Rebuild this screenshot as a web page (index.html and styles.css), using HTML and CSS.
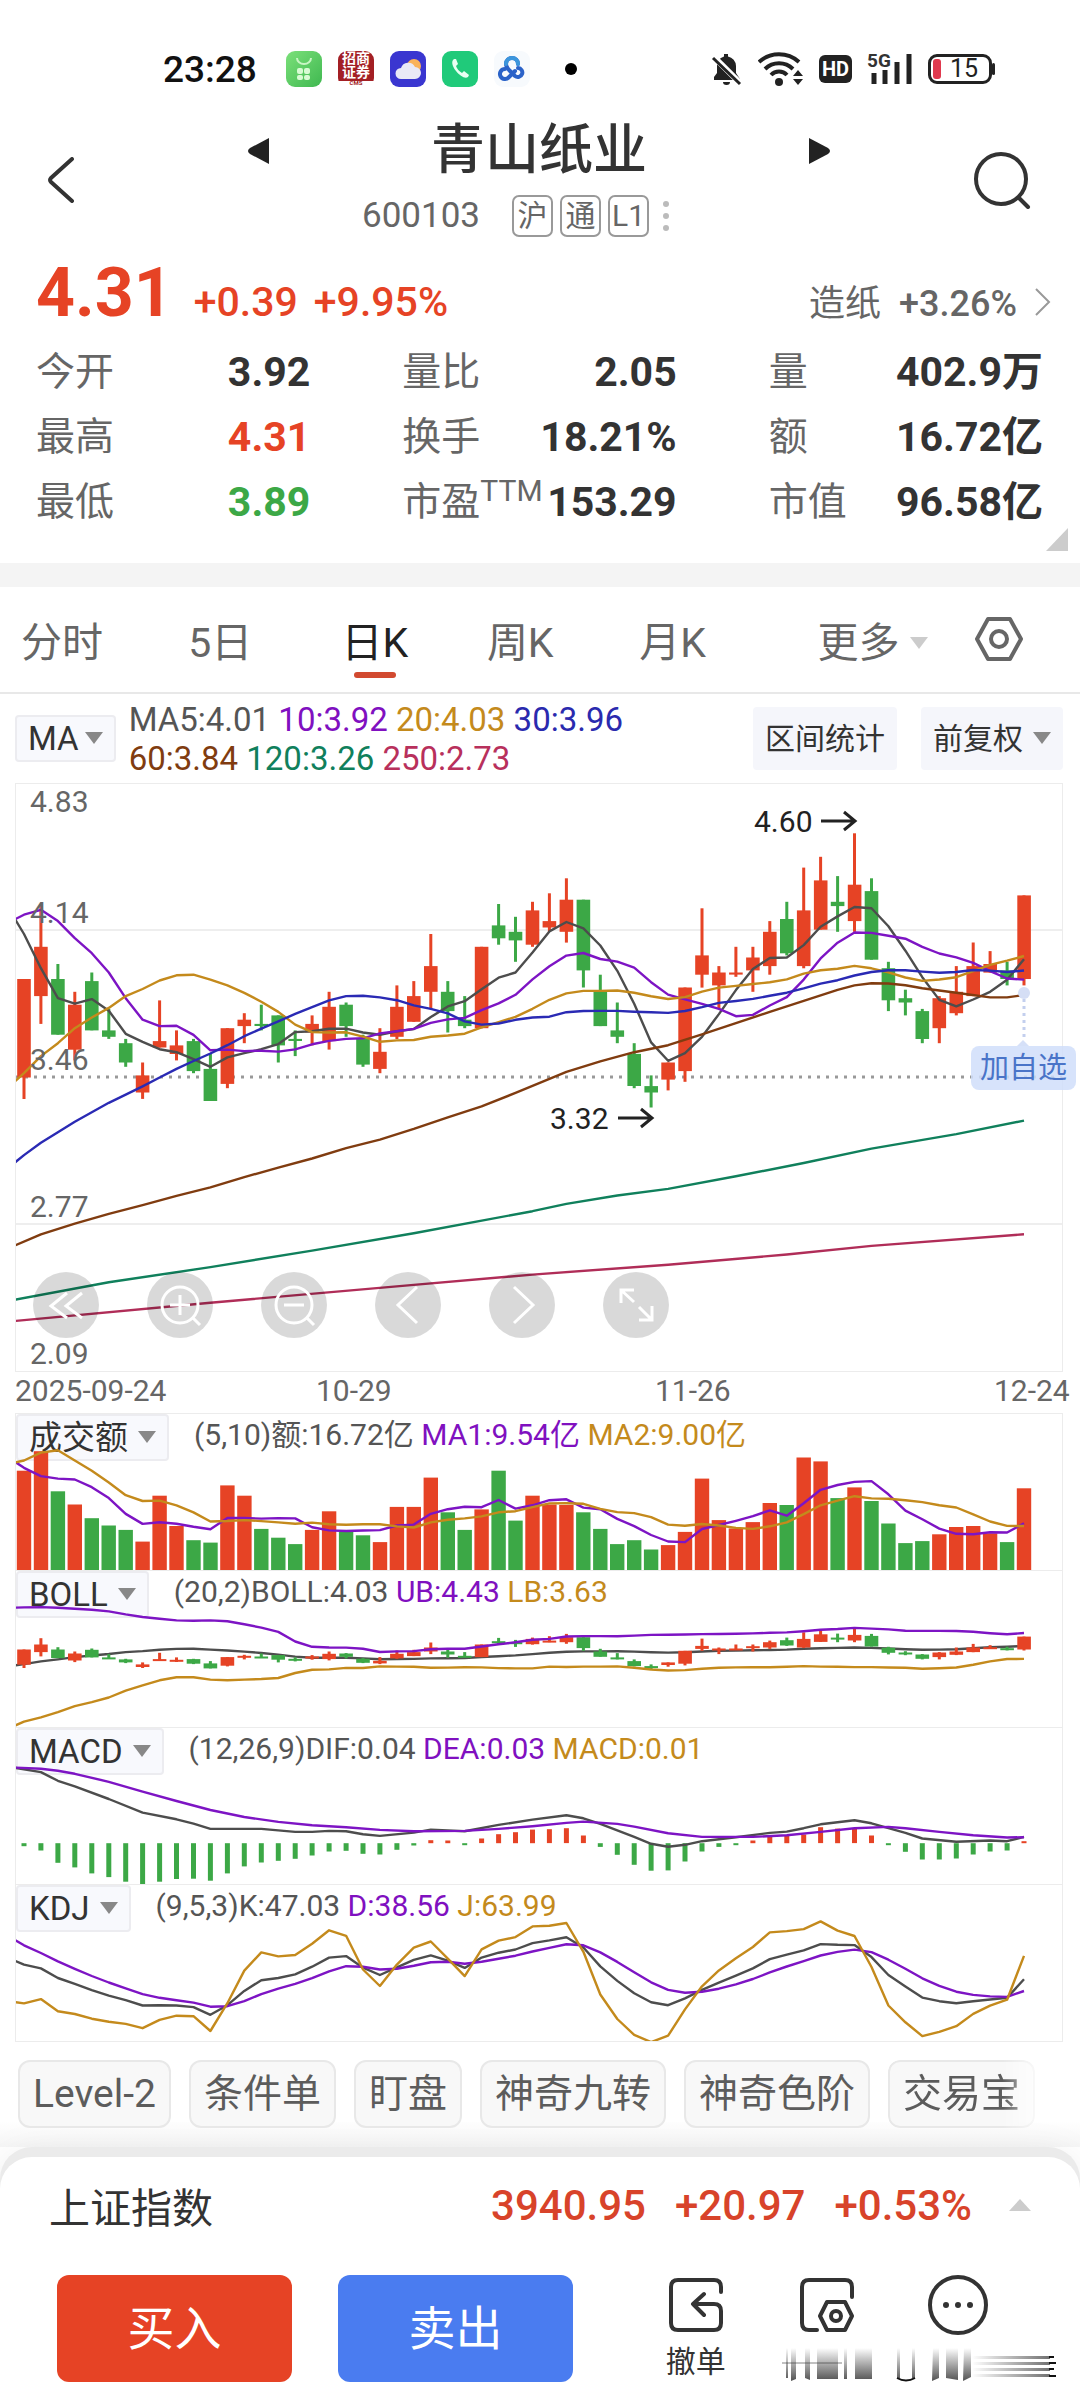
FILE: index.html
```html
<!DOCTYPE html>
<html lang="zh-CN">
<head>
  <meta charset="utf-8">
  <meta name="viewport" content="width=device-width, initial-scale=1">
  <title>青山纸业 600103</title>
  <link rel="stylesheet" href="styles.css">
</head>
<body>
  <!-- Status bar -->
  <div class="status">
    <span class="clock">23:28</span>
    <div class="apps">
      <svg viewBox="0 0 36 36"><defs><linearGradient id="leaf" x2="1" y2="1"><stop offset="0" stop-color="#7be07a"/><stop offset="1" stop-color="#3fb850"/></linearGradient></defs><rect width="36" height="36" rx="9" fill="url(#leaf)"/><path d="M11 7a7 6 0 0 0 14 0" fill="none" stroke="#c8f5c4" stroke-width="2"/><g fill="#d8fbd4"><rect x="11" y="17" width="6" height="6" rx="2"/><rect x="18" y="17" width="6" height="6" rx="2"/><rect x="11" y="24" width="6" height="5" rx="2"/><rect x="18" y="24" width="6" height="5" rx="2"/></g></svg>
      <span class="cms"><span>招商</span><span>证券</span><small>CMS</small></span>
      <svg viewBox="0 0 36 36"><rect width="36" height="36" rx="9" fill="#3a36d0"/><circle cx="24" cy="15" r="7" fill="#f9b25a"/><path d="M11 28a5.500 5.500 0 0 1 0-11 7.500 7.500 0 0 1 14-1 6 6 0 0 1 0 12z" fill="#e9e9f6"/></svg>
      <svg viewBox="0 0 36 36"><rect width="36" height="36" rx="9" fill="#20ca7a"/><path d="M12 8c-3 2-2 7 2 12s9 8 12 6l1-2-5-4-2 2c-3-2-5-4-6-7l2-2-2-5z" fill="#e8fff2"/></svg>
      <svg viewBox="0 0 36 36"><rect width="36" height="36" rx="9" fill="#f7fafd"/><g fill="none" stroke="#2a62c8" stroke-width="4" stroke-linecap="round"><path d="M24 13a6 6 0 0 0-12 0c0 3 2 5 4 7l5 5a4.500 4.500 0 1 0 3-8"/><path d="M11 18a5 5 0 1 0 4 8l6-6"/><path d="M24 13a6 6 0 0 0-12 0" stroke="#3c96dc"/></g></svg>
    </div>
    <i class="dot"></i>
    <div class="signals">
      <svg width="32" height="36" viewBox="0 0 32 36"><path d="M3 29V26l3-4V15a10 10 0 0 1 7-9.500V3h4v2.500A10 10 0 0 1 25 15v7l4 6v1z" fill="#222"/><path d="M12 31h7a3.500 3 0 0 1-7 0z" fill="#222"/><path d="M1 4l29 29" stroke="#fff" stroke-width="6"/><path d="M2 7l27 26" stroke="#222" stroke-width="3"/></svg>
      <svg width="46" height="36" viewBox="0 0 46 36"><g fill="none" stroke="#222" stroke-width="4"><path d="M1 11a30 30 0 0 1 40 0"/><path d="M7 18a20 20 0 0 1 28 0"/><path d="M13 24a11 11 0 0 1 16 0"/></g><circle cx="21" cy="31" r="4" fill="#222"/><path d="M35 25l5-6 5 6zM35 28h10l-5 6z" fill="#222"/></svg>
      <b class="hd">HD</b>
      <span class="cell"><b>5G</b><svg width="46" height="36" viewBox="0 0 46 36"><path d="M7 33V22M18 33V19M30 33V11M42 33V3" stroke="#222" stroke-width="5"/></svg></span>
      <span class="battery">15</span>
    </div>
  </div>

  <!-- Stock header -->
  <header class="header">
    <button class="icon-btn back" aria-label="返回"><svg width="28" height="46" viewBox="0 0 28 46"><path d="M25 2L4 21q-2 2 0 4l21 19" fill="none" stroke="#333" stroke-width="4" stroke-linecap="round"/></svg></button>
    <div class="header-main">
      <div class="title-row">
        <button class="icon-btn" aria-label="上一只"><svg width="22" height="26" viewBox="0 0 22 26"><path d="M22 0v26L3 16q-4-3 0-6z" fill="#222"/></svg></button>
        <h1>青山纸业</h1>
        <button class="icon-btn" aria-label="下一只"><svg width="22" height="26" viewBox="0 0 22 26"><path d="M0 0v26l19-10q4-3 0-6z" fill="#222"/></svg></button>
      </div>
      <div class="code-row">
        <span class="code">600103</span>
        <span class="tag">沪</span><span class="tag">通</span><span class="tag">L1</span>
        <svg width="20" height="30" viewBox="0 0 20 30"><g fill="#bbb"><circle cx="10" cy="3" r="3"/><circle cx="10" cy="15" r="3"/><circle cx="10" cy="27" r="3"/></g></svg>
      </div>
    </div>
    <button class="icon-btn search" aria-label="搜索"><svg width="58" height="58" viewBox="0 0 58 58"><circle cx="28" cy="28" r="25" fill="none" stroke="#333" stroke-width="4"/><path d="M46 47l9 9" stroke="#333" stroke-width="4" stroke-linecap="round"/></svg></button>
  </header>

  <!-- Quote -->
  <section class="quote">
    <div class="price-row">
      <strong class="price">4.31</strong>
      <span class="change">+0.39</span>
      <span class="change">+9.95%</span>
      <a class="sector" href="#"><span class="cn">造纸</span><span>+3.26%</span><svg width="16" height="28" viewBox="0 0 16 28"><path d="M1 1l13 13L1 27" fill="none" stroke="#999" stroke-width="2"/></svg></a>
    </div>
    <div class="stats">
      <div class="stat"><span>今开</span><b>3.92</b></div>
      <div class="stat"><span>量比</span><b>2.05</b></div>
      <div class="stat"><span>量</span><b>402.9万</b></div>
      <div class="stat"><span>最高</span><b class="up">4.31</b></div>
      <div class="stat"><span>换手</span><b>18.21%</b></div>
      <div class="stat"><span>额</span><b>16.72亿</b></div>
      <div class="stat"><span>最低</span><b class="down">3.89</b></div>
      <div class="stat"><span>市盈<sup>TTM</sup></span><b>153.29</b></div>
      <div class="stat"><span>市值</span><b>96.58亿</b></div>
    </div>
    <i class="corner"></i>
  </section>

  <!-- Period tabs -->
  <nav class="tabs">
    <a href="#">分时</a>
    <a href="#">5日</a>
    <a href="#" class="active">日K</a>
    <a href="#">周K</a>
    <a href="#">月K</a>
    <a href="#" class="more">更多<i class="caret"></i></a>
    <button class="icon-btn" aria-label="设置"><svg width="48" height="46" viewBox="0 0 48 46"><g fill="none" stroke="#666" stroke-width="4" stroke-linejoin="round"><path d="M13 3h22l11 20-11 20H13L2 23z"/><circle cx="24" cy="23" r="8"/></g></svg></button>
  </nav>

  <main class="charts">
    <div class="ma-row">
      <button class="picker">MA<i class="caret"></i></button>
      <p class="legend"><span class="c-dark">MA5:4.01</span> <span class="c-purple">10:3.92</span> <span class="c-gold">20:4.03</span> <span class="c-blue">30:3.96</span><br><span class="c-brown">60:3.84</span> <span class="c-green">120:3.26</span> <span class="c-rose">250:2.73</span></p>
      <button class="tool">区间统计</button>
      <button class="tool">前复权<i class="caret"></i></button>
    </div>

    <div class="kline">
      <svg id="kline" viewBox="0 0 1046 587"></svg>
      <div class="controls">
        <button aria-label="最早"><svg viewBox="0 0 66 66"><path d="M34 21L18 34l16 12M49 21L33 34l16 12"/></svg></button>
        <button aria-label="放大"><svg viewBox="0 0 66 66"><circle cx="33" cy="33" r="18"/><path d="M23 33h20M33 23v20M46 46l7 7"/></svg></button>
        <button aria-label="缩小"><svg viewBox="0 0 66 66"><circle cx="33" cy="33" r="18"/><path d="M23 33h20M46 46l7 7"/></svg></button>
        <button aria-label="向左"><svg viewBox="0 0 66 66"><path d="M42 15L23 33l19 18"/></svg></button>
        <button aria-label="向右"><svg viewBox="0 0 66 66"><path d="M25 15l19 18-19 18"/></svg></button>
        <button aria-label="全屏"><svg viewBox="0 0 66 66"><path d="M18 31V18h13M18 18l13 12M49 34v14H36M49 48L36 35"/></svg></button>
      </div>
      <button class="add">加自选</button>
    </div>
    <div class="dates"><span>2025-09-24</span><span>10-29</span><span>11-26</span><span>12-24</span></div>

    <section class="panel">
      <div class="panel-head"><button class="picker">成交额<i class="caret"></i></button><p class="legend"><span class="c-dark">(5,10)额:16.72亿</span> <span class="c-purple">MA1:9.54亿</span> <span class="c-gold">MA2:9.00亿</span></p></div>
      <svg id="volume" viewBox="0 0 1046 156"></svg>
    </section>
    <section class="panel">
      <div class="panel-head"><button class="picker">BOLL<i class="caret"></i></button><p class="legend"><span class="c-dark">(20,2)BOLL:4.03</span> <span class="c-purple">UB:4.43</span> <span class="c-gold">LB:3.63</span></p></div>
      <svg id="boll" viewBox="0 0 1046 156"></svg>
    </section>
    <section class="panel">
      <div class="panel-head"><button class="picker">MACD<i class="caret"></i></button><p class="legend"><span class="c-dark">(12,26,9)DIF:0.04</span> <span class="c-purple">DEA:0.03</span> <span class="c-gold">MACD:0.01</span></p></div>
      <svg id="macd" viewBox="0 0 1046 156"></svg>
    </section>
    <section class="panel">
      <div class="panel-head"><button class="picker">KDJ<i class="caret"></i></button><p class="legend"><span class="c-dark">(9,5,3)K:47.03</span> <span class="c-purple">D:38.56</span> <span class="c-gold">J:63.99</span></p></div>
      <svg id="kdj" viewBox="0 0 1046 156"></svg>
    </section>
  </main>

  <div class="chips">
    <button>Level-2</button><button>条件单</button><button>盯盘</button><button>神奇九转</button><button>神奇色阶</button><button>交易宝</button>
  </div>

  <!-- Bottom sheet -->
  <footer class="sheet">
    <div class="index-row">
      <span>上证指数</span>
      <span class="index-nums"><span>3940.95</span><span>+20.97</span><span>+0.53%</span></span>
      <i class="caret-up"></i>
    </div>
    <div class="actions">
      <div class="trades">
        <button class="trade buy">买入</button>
        <button class="trade sell">卖出</button>
      </div>
      <div class="more-actions">
        <button class="action"><svg width="60" height="60" viewBox="-3 -3 60 60"><path d="M52 14V9q0-7-7-7H9q-7 0-7 7v36q0 7 7 7h36q7 0 7-7V33q0-7-7-7H25M35 16L24 26l11 11"/></svg><span>撤单</span></button>
        <button class="action" aria-label="设置"><svg width="60" height="60" viewBox="-3 -3 60 60"><path d="M52 19V9q0-7-7-7H9q-7 0-7 7v36q0 7 7 7h8M27 24h18l7 14-7 14H27l-7-14z"/><circle cx="36" cy="38" r="5"/></svg></button>
        <button class="action" aria-label="更多"><svg width="60" height="60" viewBox="0 0 60 60"><circle cx="30" cy="30" r="28"/><g fill="#333" stroke="none"><circle cx="18" cy="30" r="3"/><circle cx="30" cy="30" r="3"/><circle cx="42" cy="30" r="3"/></g></svg></button>
      </div>
      <svg class="smear" viewBox="0 0 274 34" aria-hidden="true">
        <defs>
          <linearGradient id="down" x2="0" y2="1"><stop offset="0" stop-color="#333" stop-opacity="0"/><stop offset="1" stop-color="#333" stop-opacity=".85"/></linearGradient>
          <linearGradient id="right"><stop offset="0" stop-color="#333" stop-opacity="0"/><stop offset="1" stop-color="#333" stop-opacity=".7"/></linearGradient>
        </defs>
        <path d="M4 0h2v30h-2zM9 0h5v31l-5 2zM23 0h5v32l-5-2zM35 0h21v31h-21zM62 0h3v31h-3zM73 0h17v31h-17zM115 0h3v30h-3zM130 0h3v30h-3zM151 0h6v30l-7 3zM164 0h12v32l-12-2zM182 0h7v29l-8 4z" fill="url(#down)"/>
        <path d="M115 30q9 5 18 0" fill="none" stroke="#111" stroke-width="2"/>
        <path d="M0 14h60v2H0z" fill="#333" opacity=".3"/>
        <path d="M190 8h78v3h-78zM190 14h78v3h-78zM190 20h78v3h-78zM190 26h78v3h-78z" fill="url(#right)"/>
        <path d="M267 9h5M267 15h7M267 21h5M267 28h7" stroke="#111" stroke-width="2"/>
      </svg>
    </div>
  </footer>

  <script src="charts.js"></script>
</body>
</html>
```
FILE: styles.css
```css
* {
  box-sizing: border-box;
  margin: 0;
  padding: 0;
}

:root {
  --red: #e64325;
  --green: #3ca846;
  --ink: #333;
  --muted: #666;
  --line: #ececec;
}

body {
  font-family: Roboto, "Noto Sans CJK SC", sans-serif;
  color: var(--ink);
  background: #fff;
}

button {
  font: inherit;
  color: inherit;
  background: none;
  border: none;
}

a {
  color: inherit;
  text-decoration: none;
}

svg {
  display: block;
}

/* Status bar */
.status {
  display: flex;
  align-items: center;
  height: 87px;
  padding: 51px 88px 0 163px;
}

.clock {
  width: 123px;
  font-size: 37px;
  font-weight: 500;
  color: #111;
}

.apps {
  display: flex;
  gap: 16px;
}

.apps svg,
.cms {
  width: 36px;
  height: 36px;
}

.cms {
  display: flex;
  flex-direction: column;
  align-items: center;
  border-radius: 9px;
  background: linear-gradient(#a31f24 82%, #fff 82%);
  color: #fff;
  font-size: 14px;
  font-weight: 700;
  line-height: 14px;
}

.cms small {
  color: #a31f24;
  font-size: 6px;
  line-height: 8px;
}

.dot {
  width: 12px;
  height: 12px;
  margin-left: 35px;
  border-radius: 50%;
  background: #000;
}

.signals {
  display: flex;
  align-items: center;
  gap: 15px;
  margin-left: auto;
}

.hd {
  width: 33px;
  border-radius: 6px;
  background: #222;
  color: #fff;
  font-size: 20px;
  line-height: 28px;
  text-align: center;
}

.cell {
  position: relative;
}

.cell b {
  position: absolute;
  top: 0;
  left: 0;
  font-size: 19px;
  line-height: 19px;
}

.battery {
  position: relative;
  width: 64px;
  padding-left: 8px;
  border: 3px solid #222;
  border-radius: 9px;
  color: #222;
  font-size: 25px;
  line-height: 24px;
  text-align: center;
}

.battery::before,
.battery::after {
  content: "";
  position: absolute;
  border-radius: 3px;
}

.battery::before {
  top: 2px;
  bottom: 2px;
  left: 2px;
  width: 8px;
  background: #e0394e;
}

.battery::after {
  top: 6px;
  bottom: 6px;
  right: -6px;
  width: 3px;
  background: #222;
}

/* Stock header */
.header {
  display: grid;
  grid-template-columns: 1fr minmax(0, 584px) 1fr;
  padding: 30px 49px 0 47px;
}

.back {
  justify-self: start;
  padding-top: 40px;
}

.search {
  justify-self: end;
  padding-top: 34px;
}

.icon-btn {
  align-self: start;
}

.title-row {
  display: flex;
  align-items: center;
  justify-content: space-between;
}

.title-row .icon-btn {
  align-self: center;
}

h1 {
  font-size: 54px;
  font-weight: 500;
  line-height: 68px;
}

.code-row {
  display: flex;
  align-items: center;
  gap: 7px;
  margin-top: 10px;
  padding-left: 115px;
}

.code {
  margin-right: 25px;
  font-size: 35px;
  line-height: 42px;
  color: var(--muted);
}

.tag {
  width: 41px;
  border: 2px solid #999;
  border-radius: 7px;
  color: var(--muted);
  font-size: 30px;
  line-height: 38px;
  text-align: center;
}

/* Quote */
.quote {
  position: relative;
  padding: 16px 37px 28px 36px;
  border-bottom: 24px solid #f4f4f4;
}

.price-row {
  display: flex;
  align-items: baseline;
  color: var(--red);
}

.price {
  margin-right: 21px;
  font-size: 68px;
  line-height: 80px;
}

.change {
  margin-right: 16px;
  font-size: 41px;
  font-weight: 500;
}

.sector {
  display: flex;
  align-items: baseline;
  margin-left: auto;
  gap: 18px;
  color: var(--muted);
  font-size: 36px;
  font-weight: 500;
}

.sector .cn {
  font-weight: 400;
}

.sector svg {
  margin-right: -8px;
}

.stats {
  display: grid;
  grid-template-columns: repeat(3, 1fr);
  column-gap: 92px;
  margin-top: 7px;
}

.stat {
  display: flex;
  justify-content: space-between;
  font-size: 39px;
  line-height: 65px;
  color: var(--muted);
  white-space: nowrap;
}

.stat b {
  font-size: 41px;
  color: var(--ink);
}

.stat b.up {
  color: var(--red);
}

.stat b.down {
  color: var(--green);
}

.stat sup {
  font-size: 30px;
  line-height: 30px;
}

.corner {
  position: absolute;
  right: 12px;
  bottom: 12px;
  border-left: 22px solid transparent;
  border-bottom: 23px solid #ccc;
}

/* Period tabs */
.tabs {
  display: grid;
  grid-template-columns: 167fr 153fr 145fr 152fr 178fr 157fr 105fr;
  align-items: center;
  height: 107px;
  padding: 0 0 2px 21px;
  border-bottom: 2px solid #e8e8e8;
  color: var(--muted);
  font-size: 41px;
}

.tabs a {
  position: relative;
  justify-self: start;
}

.tabs .active {
  color: #222;
}

.tabs .active::after {
  content: "";
  position: absolute;
  left: 50%;
  bottom: -9px;
  width: 42px;
  height: 6px;
  margin-left: -21px;
  border-radius: 3px;
  background: #d24a30;
}

.tabs .icon-btn {
  align-self: center;
  justify-self: start;
}

.caret {
  display: inline-block;
  margin: 0 0 6px 10px;
  border: 9px solid transparent;
  border-top: 12px solid #888;
  border-bottom: 0;
  vertical-align: middle;
}

.more .caret {
  border-top-color: #ccc;
}

/* Charts */
.charts {
  padding: 0 17px 0 15px;
}

.ma-row {
  display: flex;
  align-items: center;
  height: 89px;
}

.picker {
  padding: 0 11px;
  border: 2px solid #ececf0;
  border-radius: 4px;
  background: #f8f9fd;
  font-size: 33px;
  line-height: 43px;
  white-space: nowrap;
}

.legend {
  font-size: 30px;
  line-height: 41px;
  white-space: nowrap;
}

.ma-row .legend {
  flex: 1;
  margin-left: 13px;
  font-size: 33px;
  line-height: 39px;
}

.ma-row .picker .caret {
  margin-left: 6px;
}

.tool {
  margin-left: 24px;
  padding: 0 12px;
  border-radius: 4px;
  background: #f5f6fb;
  font-size: 30px;
  line-height: 63px;
  white-space: nowrap;
}

.c-dark { color: #555; }
.c-purple { color: #8010c0; }
.c-gold { color: #c48a1c; }
.c-blue { color: #2a2aae; }
.c-brown { color: #803c10; }
.c-green { color: #10805c; }
.c-rose { color: #b8305c; }

.kline {
  position: relative;
  border: 1px solid var(--line);
}

.kline svg text {
  font-size: 30px;
  fill: var(--muted);
}

.kline svg text.mark {
  fill: #222;
}

.controls {
  position: absolute;
  left: 17px;
  bottom: 33px;
  display: flex;
  gap: 48px;
}

.controls button {
  width: 66px;
  height: 66px;
  border-radius: 50%;
  background: rgba(0, 0, 0, 0.15);
}

.controls path,
.controls circle {
  fill: none;
  stroke: #fff;
  stroke-width: 3;
}

.add {
  position: absolute;
  top: 262px;
  right: -14px;
  padding: 0 9px;
  border-radius: 8px;
  background: rgba(208, 222, 250, 0.85);
  color: #4a74c8;
  font-size: 29px;
  line-height: 44px;
}

.add::before {
  content: "";
  position: absolute;
  top: -6px;
  left: 50%;
  margin-left: -6px;
  border: 6px solid transparent;
  border-top: 0;
  border-bottom-color: #d5e0f8;
}

.dates {
  display: grid;
  grid-template-columns: 301fr 339fr 339fr 77fr;
  margin-right: -8px;
  padding-bottom: 4px;
  font-size: 30px;
  line-height: 37px;
  color: var(--muted);
  white-space: nowrap;
}

.panel {
  display: grid;
  border: 1px solid var(--line);
  border-bottom: 0;
}

.panel:last-child {
  border-bottom: 1px solid var(--line);
}

/* The curves run over the indicator name */
.panel-head,
.panel svg {
  grid-area: 1 / 1;
}

.panel svg {
  pointer-events: none;
}

.panel-head {
  display: flex;
  align-items: flex-start;
  gap: 25px;
}

/* Shortcut chips */
.chips {
  display: flex;
  gap: 18px;
  padding: 18px 0 19px 18px;
  overflow: hidden;
  background: linear-gradient(#fff 75%, #f6f6f6);
}

/* last chip fades out at the edge */
.chips button:last-child {
  -webkit-mask-image: linear-gradient(to right, #000 78%, rgba(0, 0, 0, 0.3));
  mask-image: linear-gradient(to right, #000 78%, rgba(0, 0, 0, 0.3));
}

.chips button {
  flex: none;
  padding: 0 13px;
  border: 2px solid #e8e8e8;
  border-radius: 12px;
  background: #f8f8f8;
  color: #5c5c5c;
  font-size: 39px;
  line-height: 64px;
}

/* Bottom sheet */
.sheet {
  border-radius: 32px 32px 0 0;
  background: #fff;
  box-shadow: 0 -10px 0 #ebebeb, 0 -2px 40px rgba(0, 0, 0, 0.08);
  margin-top: 10px;
}

.index-row {
  display: flex;
  align-items: center;
  height: 96px;
  padding: 0 49px 0 49px;
  font-size: 41px;
}

.index-nums {
  display: flex;
  gap: 29px;
  margin-left: auto;
  color: #d8432a;
  font-size: 42px;
  font-weight: 500;
}

.caret-up {
  margin-left: 37px;
  border: 11px solid transparent;
  border-top: 0;
  border-bottom: 12px solid #ccc;
}

.actions {
  display: grid;
  grid-template-columns: 516fr 394fr;
  column-gap: 57px;
  position: relative;
  padding: 22px 56px 22px 57px;
}

.trades {
  display: grid;
  grid-template-columns: 1fr 1fr;
  column-gap: 46px;
}

.more-actions {
  display: grid;
  grid-template-columns: repeat(3, 1fr);
}

.trade {
  border-radius: 12px;
  color: #fff;
  font-size: 47px;
  line-height: 103px;
}

.buy {
  background: var(--red);
}

.sell {
  background: #4a7cf0;
}

.action {
  display: flex;
  flex-direction: column;
  align-items: center;
  gap: 7px;
  font-size: 30px;
  line-height: 40px;
  white-space: nowrap;
}

.action path,
.action > svg > circle {
  fill: none;
  stroke: #333;
  stroke-width: 4;
  stroke-linecap: round;
  stroke-linejoin: round;
}

.smear {
  position: absolute;
  right: 24px;
  bottom: 22px;
  width: 274px;
}
```
FILE: charts.js
```js
const COLORS = {
  up: '#e64325', down: '#3ca846', dark: '#4d4d4d', purple: '#7d14c4', gold: '#c48a1c',
  blue: '#2a2ab4', brown: '#803c10', green: '#10805c', rose: '#b02d58'
};
const STEP = 16.95;
const FIRST = 8;
const W = 1046;

// open, close, high, low, turnover (100m)
const DAYS = [
  [3.46, 3.92, 3.92, 3.36, 20.3], [3.84, 4.07, 4.26, 3.71, 24.3], [3.92, 3.66, 3.99, 3.66, 16.1],
  [3.59, 3.80, 3.86, 3.54, 13.4], [3.91, 3.68, 3.95, 3.68, 10.6], [3.68, 3.65, 3.78, 3.64, 9.1],
  [3.62, 3.53, 3.64, 3.51, 8.2], [3.39, 3.47, 3.53, 3.36, 5.8], [3.60, 3.63, 3.82, 3.60, 15.2],
  [3.57, 3.61, 3.68, 3.54, 9.0], [3.63, 3.49, 3.64, 3.48, 6.1], [3.50, 3.35, 3.57, 3.35, 5.6],
  [3.43, 3.69, 3.69, 3.41, 17.3], [3.70, 3.73, 3.76, 3.62, 15.2], [3.71, 3.70, 3.80, 3.68, 8.4],
  [3.75, 3.61, 3.75, 3.53, 6.6], [3.64, 3.63, 3.68, 3.56, 5.3], [3.67, 3.71, 3.75, 3.61, 8.2],
  [3.63, 3.79, 3.86, 3.59, 12.0], [3.80, 3.70, 3.81, 3.65, 7.8], [3.64, 3.52, 3.66, 3.51, 7.1],
  [3.50, 3.58, 3.69, 3.48, 5.7], [3.65, 3.79, 3.89, 3.64, 12.9], [3.72, 3.84, 3.91, 3.72, 12.9],
  [3.86, 3.98, 4.13, 3.78, 18.9], [3.86, 3.77, 3.91, 3.67, 11.8], [3.73, 3.70, 3.84, 3.69, 8.2],
  [3.69, 4.07, 4.07, 3.69, 12.4], [4.17, 4.11, 4.27, 4.08, 20.3], [4.14, 4.10, 4.21, 4.00, 10.1],
  [4.08, 4.24, 4.28, 4.07, 15.2], [4.16, 4.19, 4.32, 4.14, 13.4], [4.14, 4.29, 4.39, 4.09, 13.3],
  [4.29, 3.96, 4.29, 3.88, 11.8], [3.86, 3.70, 3.94, 3.70, 8.4], [3.68, 3.65, 3.81, 3.62, 5.3],
  [3.57, 3.42, 3.62, 3.41, 6.1], [3.42, 3.39, 3.47, 3.32, 4.2], [3.45, 3.53, 3.53, 3.40, 5.1],
  [3.49, 3.88, 3.88, 3.44, 7.8], [3.94, 4.03, 4.25, 3.88, 18.7], [3.89, 3.95, 3.98, 3.78, 10.2],
  [3.94, 3.95, 4.07, 3.93, 8.5], [3.96, 4.02, 4.07, 3.86, 9.8], [3.98, 4.14, 4.19, 3.94, 13.7],
  [4.20, 4.04, 4.28, 4.03, 13.3], [3.98, 4.24, 4.44, 3.97, 23.0], [4.15, 4.38, 4.49, 4.15, 22.2],
  [4.28, 4.26, 4.40, 4.14, 14.7], [4.19, 4.36, 4.60, 4.14, 16.9], [4.33, 4.01, 4.39, 4.01, 14.1],
  [3.97, 3.82, 4.00, 3.77, 9.5], [3.83, 3.81, 3.87, 3.75, 5.5], [3.77, 3.64, 3.78, 3.62, 5.9],
  [3.69, 3.83, 3.84, 3.62, 7.3], [3.76, 3.86, 3.98, 3.75, 8.8], [3.84, 3.98, 4.09, 3.84, 9.0],
  [3.95, 3.99, 4.05, 3.95, 7.5], [3.96, 3.92, 4.00, 3.89, 5.7], [3.92, 4.31, 4.31, 3.89, 16.7]
];
const CLOSES = DAYS.map(d => d[1]);
const TURNOVER = DAYS.map(d => d[4]);

const x = i => FIRST + i * STEP;
const scale = (top, bottom, height) => v => (top - v) / (top - bottom) * height;

// averages before the window is full start at index -1
function sma(values, n, lead) {
  const points = lead.map((v, i) => [i - 1, v]);
  for (let i = n - 1; i < values.length; i++) {
    const sum = values.slice(i - n + 1, i + 1).reduce((a, b) => a + b, 0);
    points.push([i, sum / n]);
  }
  return points;
}

function line(points, y, color) {
  const d = points.map(([i, v]) => x(i).toFixed(1) + ',' + y(v).toFixed(1)).join(' ');
  return `<polyline points="${d}" fill="none" stroke="${color}" stroke-width="2.4" stroke-linejoin="round"/>`;
}

function bar(i, a, b, width, color) {
  const top = Math.min(a, b);
  const h = Math.max(Math.abs(a - b), 2);
  return `<rect x="${(x(i) - width / 2).toFixed(1)}" y="${top.toFixed(1)}" width="${width}" height="${h.toFixed(1)}" fill="${color}"/>`;
}

const dayColor = d => d[1] > d[0] ? COLORS.up : COLORS.down;

function candles(y) {
  return DAYS.map((d, i) => {
    const c = dayColor(d);
    return bar(i, y(d[2]), y(d[3]), 3, c) + bar(i, y(d[0]), y(d[1]), 13.6, c);
  }).join('');
}

const MA20 = sma(CLOSES, 20, [3.41, 3.48, 3.56, 3.62, 3.69, 3.74, 3.785, 3.84, 3.873, 3.913, 3.937,
  3.94, 3.917, 3.89, 3.855, 3.814, 3.766, 3.707, 3.672, 3.67]);

function drawKline() {
  const y = scale(4.83, 2.09, 587);
  let out = '';
  [146, 440].forEach(g => { out += `<path d="M0 ${g}H${W}" stroke="#eee" stroke-width="2"/>`; });
  out += `<path d="M0 293H${W}" stroke="#999" stroke-width="3" stroke-dasharray="3 6"/>`;
  out += candles(y);
  out += line(sma(CLOSES, 5, [4.26, 4.13, 3.97, 3.83, 3.805]), y, COLORS.dark);
  out += line(sma(CLOSES, 10, [4.18, 4.22, 4.243, 4.19, 4.11, 4.04, 3.95, 3.83, 3.73, 3.70]), y, COLORS.purple);
  out += line(MA20, y, COLORS.gold);
  out += line(sma(CLOSES, 30, [3.034, 3.098, 3.155, 3.204, 3.253, 3.298, 3.342, 3.38, 3.419, 3.46,
    3.50, 3.537, 3.572, 3.611, 3.653, 3.688, 3.722, 3.757, 3.788, 3.82, 3.84, 3.842, 3.834, 3.821,
    3.797, 3.78, 3.759, 3.722, 3.707, 3.712]), y, COLORS.blue);
  out += line([[-1, 2.66], [1, 2.728], [3, 2.778], [5, 2.824], [7, 2.864], [9, 2.908], [11, 2.947],
    [13, 2.995], [15, 3.039], [17, 3.082], [19, 3.13], [21, 3.17], [23, 3.22], [25, 3.274],
    [27, 3.325], [29, 3.388], [32, 3.486], [34, 3.535], [36, 3.578], [38, 3.611], [40, 3.661],
    [42, 3.714], [44, 3.766], [46, 3.818], [48, 3.869], [49, 3.89], [50, 3.9], [51, 3.899],
    [52, 3.891], [53, 3.877], [55, 3.856], [57, 3.834], [58, 3.834], [59, 3.845]], y, COLORS.brown);
  out += line([[-1, 2.416], [5, 2.504], [11, 2.575], [17, 2.652], [23, 2.733], [30, 2.836],
    [32, 2.87], [35, 2.909], [38, 2.94], [42, 2.999], [46, 3.061], [50, 3.128], [55, 3.196],
    [59, 3.259]], y, COLORS.green);
  out += line([[-1, 2.32], [11, 2.409], [23, 2.492], [30, 2.54], [38, 2.586], [45, 2.634],
    [50, 2.674], [59, 2.728]], y, COLORS.rose);
  [['4.83', 28], ['4.14', 139], ['3.46', 286], ['2.77', 433], ['2.09', 580]].forEach(([t, ty]) => {
    out += `<text x="14" y="${ty}">${t}</text>`;
  });
  // high and low marks
  out += '<text class="mark" x="738" y="48">4.60</text><text class="mark" x="534" y="345">3.32</text>';
  out += '<path d="M805 37h33m-10-9l11 9-11 9M602 334h33m-10-9l11 9-11 9" fill="none" stroke="#222" stroke-width="3"/>';
  out += '<circle cx="1008" cy="209" r="6" fill="#d5def5"/><path d="M1008 215v40" stroke="#c3cfee" stroke-width="3" stroke-dasharray="3 4"/>';
  document.getElementById('kline').innerHTML = out;
}

function drawVolume() {
  const y = scale(31.9, 0, 156);
  let out = DAYS.map((d, i) => bar(i, y(d[4]), 156, 14.4, dayColor(d))).join('');
  out += line(sma(TURNOVER, 5, [23.2, 20.9, 19.2, 18.7, 18.5]), y, COLORS.purple);
  out += line(sma(TURNOVER, 10, [21.6, 22.4, 24, 24.5, 22.4, 20.3, 17.9, 15.3, 14.1, 14.2]), y, COLORS.gold);
  document.getElementById('volume').innerHTML = out;
}

function drawBoll() {
  const y = scale(6.29, 1.58, 156);
  const ub = [5.18, 5.19, 5.2, 5.18, 5.15, 5.12, 5.07, 4.98, 4.9, 4.85, 4.8, 4.79, 4.8, 4.77, 4.68,
    4.58, 4.45, 4.16, 4, 3.98].map((v, i) => [i - 1, v]);
  const lb = [1.52, 1.74, 1.87, 2.03, 2.21, 2.33, 2.47, 2.68, 2.84, 2.99, 3.08, 3.08, 3.01, 2.99,
    3.01, 3.03, 3.06, 3.21, 3.31, 3.32].map((v, i) => [i - 1, v]);
  MA20.filter(([i]) => i > 18).forEach(([i, mid]) => {
    const win = CLOSES.slice(i - 19, i + 1);
    const sd = Math.sqrt(win.reduce((s, c) => s + (c - mid) ** 2, 0) / 20);
    ub.push([i, mid + 2 * sd]);
    lb.push([i, mid - 2 * sd]);
  });
  document.getElementById('boll').innerHTML = line(MA20, y, COLORS.dark) + candles(y) +
    line(ub, y, COLORS.purple) + line(lb, y, COLORS.gold);
}

function drawMacd() {
  const y = scale(347, -123, 156);
  const hist = [-9, -22, -59, -73, -91, -102, -116, -124, -116, -108, -107, -113, -91, -70, -58, -53,
    -47, -37, -25, -23, -32, -34, -20, -7, 9, 8, -4, 14, 27, 33, 41, 42, 45, 23, -11, -35, -65, -83,
    -82, -55, -25, -11, -2, 8, 22, 24, 26, 48, 44, 45, 23, -6, -26, -49, -49, -46, -34, -25, -22, 6];
  const dif = [[-1, 231], [1, 214], [2, 188], [3, 171], [5, 133], [7, 92], [9, 72], [10, 59], [11, 43],
    [14, 43], [16, 34], [17, 34], [18, 37], [19, 36], [20, 27], [21, 22], [23, 32], [24, 41], [26, 36],
    [28, 55], [30, 71], [32, 84], [33, 75], [34, 58], [36, 19], [37, -2], [38, -11], [39, -5], [40, 6],
    [42, 18], [44, 31], [45, 35], [46, 45], [47, 57], [49, 69], [50, 60], [52, 31], [53, 14], [55, 4],
    [57, 8], [58, 6], [59, 19]];
  const dea = [[-1, 229], [1, 224], [2, 218], [3, 209], [5, 185], [7, 155], [9, 127], [11, 100],
    [13, 79], [15, 64], [17, 54], [19, 48], [21, 40], [23, 36], [26, 37], [28, 43], [30, 51], [32, 61],
    [33, 65], [35, 58], [36, 50], [38, 30], [40, 19], [43, 19], [45, 24], [47, 34], [49, 45], [51, 49],
    [52, 45], [54, 34], [56, 24], [58, 17], [59, 18]];
  document.getElementById('macd').innerHTML =
    hist.map((v, i) => bar(i, y(0), y(v), 5, v > 0 ? COLORS.up : COLORS.down)).join('') +
    line(dif, y, COLORS.dark) + line(dea, y, COLORS.purple);
}

function drawKdj() {
  const y = scale(113.9, 3.3, 156);
  const k = [62.6, 57.4, 54.8, 48, 43.8, 39.3, 35.5, 32.2, 28.5, 28.7, 28.5, 27.3, 21.9, 28.7, 38.8,
    46.4, 48, 50.6, 56, 62.4, 63.5, 55.3, 50.1, 55.5, 60.9, 64, 60.2, 55.1, 62.4, 65.9, 68.2, 72.7,
    74.6, 76.9, 69.6, 56.2, 45.9, 37.2, 30.8, 28.7, 33.6, 39.5, 44.7, 49.6, 54.8, 61.4, 64.5, 67.5,
    72, 71.5, 71.3, 62.8, 50.1, 41.9, 34.1, 31.5, 30.1, 31.5, 32.7, 33.9, 47.03];
  let d = 78;
  const ks = [], ds = [], js = [];
  k.forEach((v, n) => {
    if (n > 0) d = (d * 2 + v) / 3;
    ks.push([n - 1, v]);
    ds.push([n - 1, d]);
    js.push([n - 1, 3 * v - 2 * d]);
  });
  document.getElementById('kdj').innerHTML =
    line(ks, y, COLORS.dark) + line(ds, y, COLORS.purple) + line(js, y, COLORS.gold);
}

drawKline();
drawVolume();
drawBoll();
drawMacd();
drawKdj();
```
